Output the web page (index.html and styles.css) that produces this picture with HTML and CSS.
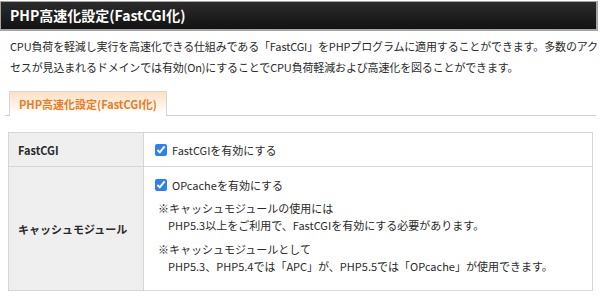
FILE: index.html
```html
<!DOCTYPE html>
<html lang="ja">
<head>
  <meta charset="UTF-8" />
  <title>PHP高速化設定(FastCGI化)</title>
  <link rel="stylesheet" href="styles.css">
</head>
<body>

  <h1 class="title">PHP高速化設定(FastCGI化)</h1>

  <p class="lead">CPU負荷を軽減し実行を高速化できる仕組みである「FastCGI」をPHPプログラムに適用することができます。多数のアクセスが見込まれるドメインでは有効(On)にすることでCPU負荷軽減および高速化を図ることができます。</p>

  <ul class="tabs">
    <li class="tab active">PHP高速化設定(FastCGI化)</li>
  </ul>

  <table class="settings">
    <tr class="row-fastcgi">
      <th>FastCGI</th>
      <td>
        <label class="check"><input type="checkbox" checked /> FastCGIを有効にする</label>
      </td>
    </tr>
    <tr class="row-cache">
      <th>キャッシュモジュール</th>
      <td>
        <label class="check"><input type="checkbox" checked /> OPcacheを有効にする</label>
        <p class="note">※キャッシュモジュールの使用には<br><span>PHP5.3以上をご利用で、FastCGIを有効にする必要があります。</span></p>
        <p class="note">※キャッシュモジュールとして<br><span>PHP5.3、PHP5.4では「APC」が、PHP5.5では「OPcache」が使用できます。</span></p>
      </td>
    </tr>
  </table>

</body>
</html>
```

FILE: styles.css
```css
* {
  margin: 0;
  padding: 0;
  box-sizing: border-box;
}

body {
  font-family: "Noto Sans CJK JP", sans-serif;
  font-size: 11px;
  color: #2a2a2a;
  background: #fff;
}

.title {
  margin: 1px 2px 0 0;
  height: 30px;
  padding: 0 9px;
  border: 1px solid #a5a5a5;
  border-width: 1px 2px 2px 1px;
  background: linear-gradient(#2c2c2c, #121212);
  color: #fff;
  font-size: 14px;
  font-weight: bold;
  line-height: 27px;
}

.lead {
  margin-top: 5px;
  padding: 0 2px 0 10px;
  line-height: 21px;
  letter-spacing: -0.15px;
}

.tabs {
  list-style: none;
  display: flex;
  margin: 13px 4px 0 5px;
  padding-left: 4px;
  border-bottom: 1px solid #cfcfcf;
}

.tab {
  height: 25px;
  margin-bottom: -1px;
  padding: 0 9px;
  border: 1px solid #d6d6d6;
  border-bottom: none;
  background: linear-gradient(#fde0c4, #fff 90%);
  color: #ef7a22;
  font-weight: bold;
  line-height: 25px;
}

.settings {
  width: 585px;
  margin: 16px 0 0 8px;
  border-collapse: collapse;
  border: 1px solid #cfcfcf;
}

.settings th,
.settings td {
  border: 1px solid #d6d6d6;
  text-align: left;
  vertical-align: middle;
}

.settings th {
  width: 135px;
  padding: 0 9px;
  background: #efefef;
  font-weight: bold;
}

.settings td {
  padding: 0 11px;
}

.row-fastcgi {
  height: 34px;
}

.row-cache {
  height: 124px;
}

.row-cache td {
  vertical-align: top;
  padding-top: 10px;
}

.check {
  display: flex;
  align-items: center;
}

.check input {
  width: 12px;
  height: 12px;
  margin: 0 5px 0 0;
  accent-color: #2d7ff5;
}

.note {
  margin: 7px 0 0 3px;
  line-height: 17px;
}

.note span {
  padding-left: 10px;
}
```
